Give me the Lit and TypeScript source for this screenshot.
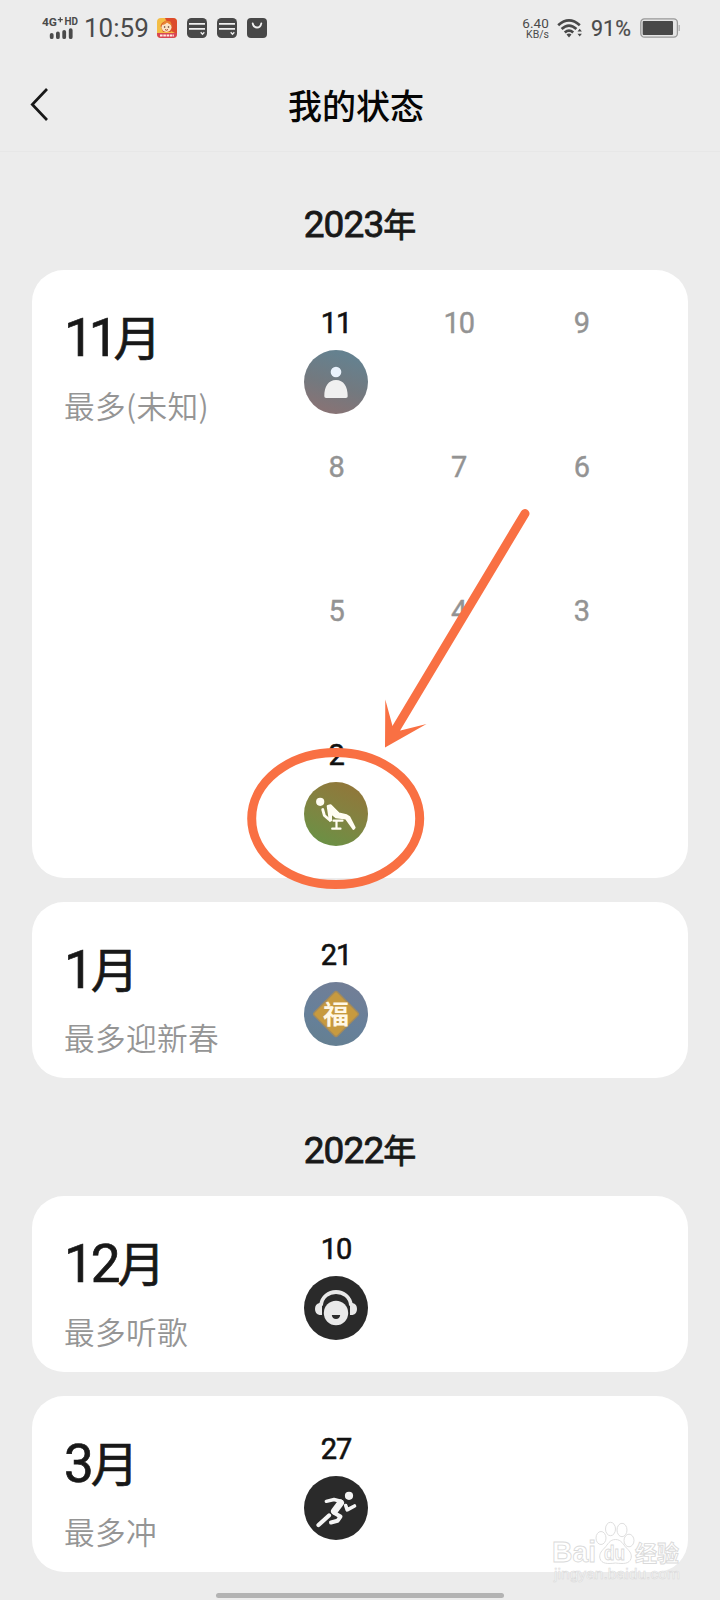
import { LitElement, html, css, svg, nothing } from "lit";
import { customElement, property } from "lit/decorators.js";

type Day = { n: number; icon?: string };
type Month = { num: string; label: string; days: Day[] };
type Year = { year: string; months: Month[] };

const YEARS: Year[] = [
  {
    year: "2023",
    months: [
      {
        num: "11",
        label: "最多(未知)",
        days: [
          { n: 11, icon: "person" }, { n: 10 }, { n: 9 },
          { n: 8 }, { n: 7 }, { n: 6 },
          { n: 5 }, { n: 4 }, { n: 3 },
          { n: 2, icon: "rest" },
        ],
      },
      { num: "1", label: "最多迎新春", days: [{ n: 21, icon: "fu" }] },
    ],
  },
  {
    year: "2022",
    months: [
      { num: "12", label: "最多听歌", days: [{ n: 10, icon: "music" }] },
      { num: "3", label: "最多冲", days: [{ n: 27, icon: "run" }] },
    ],
  },
];

const GLYPHS: Record<string, unknown> = {
  person: svg`
    <circle cx="32" cy="22" r="5.3" fill="#e9f2fc"/>
    <path d="M20.3 46.2C20.3 36.4 24.4 30 32 30s11.7 6.4 11.7 16.2q0 1.8-1.8 1.8H22.1q-1.8 0-1.8-1.8z" fill="#f0f0f0"/>`,
  rest: svg`
    <g fill="none" stroke="#fffdf2" stroke-linecap="round" stroke-linejoin="round">
      <circle cx="16.200" cy="19.800" r="4.100" fill="#fffdf2" stroke="none"/>
      <path d="M18.700 27.500L20.400 33.500L25 37.500" stroke-width="2.800"/>
      <path d="M23.800 24L26.500 23.300L35 31.700L42.500 33.300L45.300 35.200L50.500 45.500L49.500 46.800L42 36.300L32 35.200L26.800 31L27 38.300L26 38.800z" fill="#fffdf2" stroke-width="2.200"/>
      <path d="M29.500 38.700H38.500M32.500 39v7M28.200 46.700h8.300" stroke-width="2.200"/>
    </g>`,
  fu: svg`
    <rect x="15.500" y="15.500" width="33" height="33" rx="2.600" transform="rotate(45 32 32)" fill="#c79a3f" stroke="#a28a5c" stroke-width="1.400"/>
    <text x="32" y="41.500" text-anchor="middle" class="fu">福</text>`,
  music: svg`
    <g fill="none" stroke="#e9e9e9">
      <path d="M17 29.500C18.500 11.500 45.500 11.500 47 29.500" stroke-width="3.800"/>
      <path d="M18 27v12h-2.500q-4.500-1-4.500-6t4.500-6z" fill="#e9e9e9" stroke="none"/>
      <path d="M46 27v12h2.500q4.500-1 4.500-6t-4.500-6z" fill="#e9e9e9" stroke="none"/>
      <circle cx="32" cy="37" r="12.200" fill="#e9e9e9" stroke="none"/>
      <path d="M27.800 39h8.400q-.5 4-4.200 4t-4.200-4z" fill="#2b2b2b" stroke="none"/>
    </g>`,
  run: svg`
    <g fill="none" stroke="#f5f5f5" stroke-linecap="round" stroke-linejoin="round">
      <circle cx="45" cy="19.800" r="4.100" fill="#f5f5f5" stroke="none"/>
      <path d="M22.300 25.300L30 23.500L37.500 25.500" stroke-width="3.400"/>
      <path d="M36.500 27L30.500 35" stroke-width="7"/>
      <path d="M29.500 36.500L36.500 40.500L33.500 44.800L27 46.500" stroke-width="4"/>
      <path d="M25 39.500L14.500 49" stroke-width="4.200"/>
      <path d="M41.700 29.500L43.200 33.800L50.500 30" stroke-width="3.600"/>
    </g>`,
};

@customElement("status-badge")
class StatusBadge extends LitElement {
  @property() icon = "";

  static styles = css`
    :host { display: block; width: 64px; height: 64px; }
    .disc { width: 64px; height: 64px; border-radius: 50%; overflow: hidden; background: #2a2a2a; }
    .person { background: linear-gradient(197deg, #65818f 15%, #73797f 55%, #8b7273 95%); }
    .rest { background: linear-gradient(205deg, #90773a 12%, #828341 48%, #6a9145 90%); }
    .fu-bg { background: linear-gradient(200deg, #737e96 5%, #66809a 60%, #647f8e 100%); }
    svg { display: block; }
    .fu { font: 700 26px "Noto Sans CJK SC", sans-serif; fill: #fff8e6; }
  `;

  render() {
    const tone = this.icon === "fu" ? "fu-bg" : this.icon;
    return html`<div class="disc ${tone}">
      <svg width="64" height="64" viewBox="0 0 64 64">${GLYPHS[this.icon]}</svg>
    </div>`;
  }
}

@customElement("month-card")
class MonthCard extends LitElement {
  @property({ attribute: false }) month!: Month;

  static styles = css`
    :host { display: block; }
    .card {
      display: grid; grid-template-columns: 210.700px 1fr;
      padding: 16px 45px 16px 32px; border-radius: 32px; background: #fff;
    }
    .name {
      display: flex; align-items: baseline; height: 56px; margin-top: 24px;
      font: 400 48px/56px Roboto, "Noto Sans CJK SC", sans-serif; color: #181818;
      -webkit-text-stroke: .7px #181818;
    }
    .num { font-size: 53px; letter-spacing: -3px; }
    .tight { letter-spacing: -5px; }
    .label {
      margin-top: 19px; white-space: nowrap; color: #959595; letter-spacing: .3px;
      font: 350 30.700px/40px "Noto Sans CJK SC", sans-serif;
    }
    .days { display: grid; grid-template-columns: repeat(3, 122.700px); grid-auto-rows: 144px; }
    .day { display: flex; flex-direction: column; align-items: center; padding-top: 21px; }
    .n {
      font: 400 29px/32px Roboto, sans-serif; color: #939393; margin-bottom: 11px;
      letter-spacing: -1px; padding-left: 0; -webkit-text-stroke: .4px #939393;
    }
    .on { color: #111; -webkit-text-stroke: .6px #111; }
  `;

  render() {
    const m = this.month;
    return html`<section class="card">
      <div>
        <div class="name"><span class="num ${m.num === "11" ? "tight" : ""}">${m.num}</span><span>月</span></div>
        <div class="label">${m.label}</div>
      </div>
      <div class="days">
        ${m.days.map((d) => html`<div class="day">
          <span class="n ${d.icon ? "on" : ""}">${d.n}</span>
          ${d.icon ? html`<status-badge icon=${d.icon}></status-badge>` : nothing}
        </div>`)}
      </div>
    </section>`;
  }
}

@customElement("app-root")
class AppRoot extends LitElement {
  static styles = css`
    :host {
      display: block; position: relative; width: 720px; height: 1600px;
      overflow: hidden; background: #ececec;
      font-family: Roboto, "Noto Sans CJK SC", sans-serif;
    }
    .status { display: flex; align-items: center; height: 56px; padding: 0 40px 0 42px; color: #4a4a4a; }
    .net { width: 36px; margin-right: 6px; }
    .time { width: 65px; font-size: 26px; line-height: 30px; margin-right: 8px; }
    .apps { display: flex; gap: 10px; flex: 1; }
    .speed { width: 30px; display: flex; flex-direction: column; align-items: flex-end; margin-right: 8px; padding-top: 2px; }
    .rate { font-size: 13.500px; line-height: 11px; letter-spacing: .1px; }
    .unit { font-size: 10.500px; line-height: 11px; }
    .pct { width: 42px; margin: 0 7px 0 9px; font-size: 21.500px; line-height: 30px; padding-top: 2px; -webkit-text-stroke: .2px #4a4a4a; }
    svg { display: block; }
    .bar {
      display: grid; grid-template-columns: 84px 1fr 92px; align-items: center;
      height: 95px; border-bottom: 1px solid #e7e7e7; margin-bottom: 1px;
    }
    .back { margin-left: 27.500px; }
    .title { text-align: center; font: 500 34px/48px "Noto Sans CJK SC", sans-serif; color: #050505; padding-top: 2px; }
    .list { padding: 0 32px; }
    .year {
      display: flex; justify-content: center; align-items: baseline; height: 48px;
      padding: 48px 0 21px; color: #181818;
      font: 400 33px/48px Roboto, "Noto Sans CJK SC", sans-serif;
      -webkit-text-stroke: .8px #181818;
    }
    .months + .year { padding-top: 49px; }
    .yn { font-size: 37px; letter-spacing: -.9px; }
    .months { display: flex; flex-direction: column; gap: 24px; }
    .marks { position: absolute; left: 0; top: 0; }
    .home { position: absolute; left: 216px; top: 1593px; width: 288px; height: 5px; border-radius: 3px; background: #b3b3b3; }
    .net-text { font: 700 10.500px Roboto, sans-serif; fill: #4a4a4a; }
    .wm { font-family: "Liberation Sans", sans-serif; fill: #fff; fill-opacity: .6; stroke: #dadada; stroke-width: .9; }
    .wm-latin { font-size: 30px; font-weight: 700; }
    .wm-du { font-size: 20px; font-weight: 700; }
    .wm-cn { font: 700 22px "Noto Sans CJK SC", sans-serif; }
    .wm-url { font-size: 15.500px; fill-opacity: .8; stroke-width: .6; }
  `;

  private cardIcon() {
    return html`<svg width="20" height="20" viewBox="0 0 20 20">
      <rect width="20" height="20" rx="4.500" fill="#484848"/>
      <path d="M2 5.800h16M2 10.800h16" fill="none" stroke="#f0f0f0" stroke-width="1.700"/>
      <path d="M13.700 14.300l1.800 2 1.800-2" fill="none" stroke="#f0f0f0" stroke-width="1.300"/>
    </svg>`;
  }

  render() {
    return html`
      <div class="status">
        <svg class="net" width="36" height="24" viewBox="0 0 36 24">
          <text class="net-text" x="0" y="10" textLength="15" lengthAdjust="spacingAndGlyphs">4G</text>
          <path d="M18.300 1.200v5M15.800 3.700h5" stroke="#4a4a4a" stroke-width="1.300"/>
          <text class="net-text" x="22.500" y="9" textLength="13.500" lengthAdjust="spacingAndGlyphs">HD</text>
          <path d="M9.700 18.800v2.400M15.900 17.500v3.700M22.200 15.800v5.400M28.700 14.200v7" stroke="#4a4a4a" stroke-width="3.800" stroke-linecap="round"/>
        </svg>
        <span class="time">10:59</span>
        <div class="apps">
          <svg width="20" height="20" viewBox="0 0 20 20">
            <rect width="20" height="20" rx="4" fill="#f3bd45"/>
            <path d="M8 0h8a4 4 0 0 1 4 4v12l-6-3z" fill="#dc4a2c"/>
            <path d="M3.500 8C5 2 14 1 15.500 7.500L14 14H6z" fill="#d9622b"/>
            <ellipse cx="9.500" cy="9.300" rx="5" ry="4.700" fill="#fbe3c5"/>
            <path d="M5 7q4-.5 5-3 1 2 4.500 3l-1-3.500L8 2.500z" fill="#e98332"/>
            <circle cx="7.600" cy="9" r=".8" fill="#513026"/><circle cx="11.500" cy="9" r=".8" fill="#513026"/>
            <path d="M8 11.500q1.500 1.500 3 0" stroke="#a53c2c" fill="none"/>
            <path d="M0 15h20v1a4 4 0 0 1-4 4H4a4 4 0 0 1-4-4z" fill="#d84553"/>
            <path d="M3 17.500h14" stroke="#ffe9e2" stroke-width="2.200" stroke-dasharray="2.600 .7"/>
          </svg>
          ${this.cardIcon()} ${this.cardIcon()}
          <svg width="20" height="20" viewBox="0 0 20 20">
            <rect width="20" height="20" rx="4" fill="#484848"/>
            <path d="M5.700 5.300q.8 4.200 4.300 4.200t4.300-4.200" fill="none" stroke="#f2f2f2" stroke-width="1.800" stroke-linecap="round"/>
          </svg>
        </div>
        <div class="speed"><span class="rate">6.40</span><span class="unit">KB/s</span></div>
        <svg width="25" height="20" viewBox="0 0 25 20">
          <g fill="none" stroke="#484848" stroke-width="2.700">
            <path d="M1.200 7.200Q12 -2.600 22.800 7.200"/>
            <path d="M4.600 11Q12 4.200 19.400 11"/>
            <path d="M7.800 14.600Q12 10.800 16.200 14.600"/>
          </g>
          <path d="M9.500 16.500q2.500-2 5 0L12 19.500z" fill="#484848"/>
          <path d="M20.500 13.500L22.700 10.800l2.200 2.700zM20.500 15.700L22.700 18.600l2.200-2.900z" fill="#484848"/>
        </svg>
        <span class="pct">91%</span>
        <svg width="40" height="20" viewBox="0 0 40 20">
          <rect x=".8" y=".8" width="36.600" height="18.400" rx="3.600" fill="#e4e4e4" stroke="#999" stroke-width="1.300"/>
          <rect x="2.700" y="3" width="30.300" height="14" rx="1" fill="#484848"/>
          <path d="M39.200 7v6" stroke="#aaa" stroke-width="1.200"/>
        </svg>
      </div>

      <div class="bar">
        <svg class="back" width="24" height="40" viewBox="0 0 24 40">
          <path d="M19 5L4.300 20.500l14.700 15.500" fill="none" stroke="#181818" stroke-width="2.700"/>
        </svg>
        <div class="title">我的状态</div>
      </div>

      <div class="list">
        ${YEARS.map((y) => html`
          <div class="year"><span class="yn">${y.year}</span><span>年</span></div>
          <div class="months">
            ${y.months.map((m) => html`<month-card .month=${m}></month-card>`)}
          </div>`)}
      </div>

      <div class="home"></div>
      <svg class="marks" width="720" height="1600" viewBox="0 0 720 1600">
        <g class="wm">
          <text class="wm-latin" x="552" y="1562" textLength="44" lengthAdjust="spacingAndGlyphs">Bai</text>
          <ellipse cx="601" cy="1538" rx="5" ry="6.500"/>
          <ellipse cx="610.500" cy="1529" rx="5" ry="6.700"/>
          <ellipse cx="622" cy="1530" rx="5" ry="6.700"/>
          <ellipse cx="629" cy="1540.500" rx="5" ry="6.300"/>
          <path d="M615.500 1539.500c6 0 7.500 5 11 8.500 4 4 5.500 6.500 4.500 10.500-1.500 5.500-8 5.500-15.500 4.500-7.500 1-14 1-15.500-4.500-1-4 .5-6.500 4.500-10.500 3.500-3.500 5-8.500 11-8.500z"/>
          <text class="wm-du" x="604" y="1560" textLength="21" lengthAdjust="spacingAndGlyphs">du</text>
          <text class="wm-cn" x="635" y="1561">经验</text>
          <text class="wm-url" x="554" y="1579" textLength="126" lengthAdjust="spacingAndGlyphs">jingyan.baidu.com</text>
        </g>
        <ellipse cx="335.700" cy="818.500" rx="84" ry="66" fill="none" stroke="#f97043" stroke-width="9"/>
        <path d="M525 513.500L394 732" stroke="#f97043" stroke-width="9" stroke-linecap="round"/>
        <path d="M385 747.500L385.300 699.500L392.500 726L400.500 730.500L426.500 724z" fill="#f97043"/>
      </svg>`;
  }
}
